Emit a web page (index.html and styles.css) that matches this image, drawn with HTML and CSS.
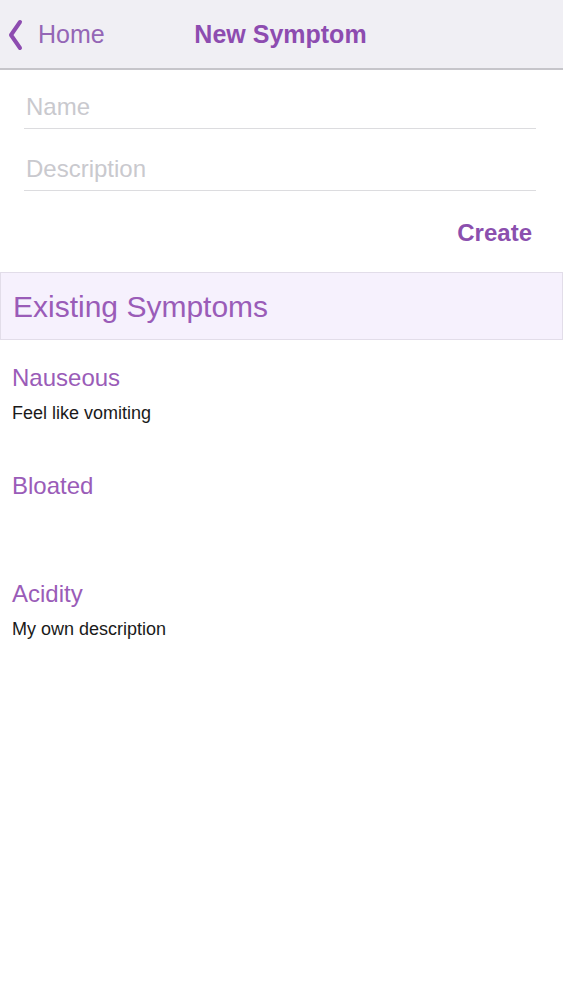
FILE: index.html
```html
<!DOCTYPE html>
<html>
<head>
<meta charset="utf-8">
<link rel="stylesheet" href="styles.css">
</head>
<body>
<div class="nav">
  <div class="back">
    <svg class="chev" width="16" height="32" viewBox="0 0 16 32"><path d="M13 3 L4 16 L13 29" fill="none" stroke="#8d4cb0" stroke-width="4" stroke-linecap="round" stroke-linejoin="round"/></svg>
    <span class="back-label">Home</span>
  </div>
  <div class="title">New Symptom</div>
</div>
<div class="form">
  <div class="field field-first"><span class="placeholder">Name</span></div>
  <div class="field"><span class="placeholder">Description</span></div>
</div>
<div class="actions"><span class="create">Create</span></div>
<div class="section-header">Existing Symptoms</div>
<div class="list">
  <div class="row">
    <div class="row-name">Nauseous</div>
    <div class="row-desc">Feel like vomiting</div>
  </div>
  <div class="row">
    <div class="row-name">Bloated</div>
    <div class="row-desc"></div>
  </div>
  <div class="row">
    <div class="row-name">Acidity</div>
    <div class="row-desc">My own description</div>
  </div>
</div>
</body>
</html>
```
FILE: styles.css
```css
html, body {
  margin: 0;
  padding: 0;
  background: #ffffff;
  font-family: "Liberation Sans", Arial, sans-serif;
}
.nav {
  height: 68px;
  background: #f0eff4;
  border-bottom: 2px solid #c6c5ca;
  display: flex;
  align-items: center;
  justify-content: center;
  position: relative;
}
.back {
  position: absolute;
  left: 7px;
  top: 0;
  height: 68px;
  display: flex;
  align-items: center;
  gap: 15px;
}
.chev {
  display: block;
  margin-top: 2px;
}
.back-label {
  font-size: 25px;
  color: #9466b6;
  line-height: 30px;
}
.title {
  font-size: 25px;
  font-weight: bold;
  color: #8d4cb0;
  line-height: 30px;
  margin-left: -2px;
}
.form {
  padding: 0 27px 0 24px;
}
.field {
  box-sizing: border-box;
  height: 62px;
  border-bottom: 1px solid #dcdcdf;
  display: flex;
  align-items: flex-end;
  padding: 0 0 9px 2px;
}
.field-first {
  height: 59px;
}
.placeholder {
  font-size: 24px;
  line-height: 24px;
  color: #c9c9ce;
}
.actions {
  height: 81px;
  box-sizing: border-box;
  padding: 30px 31px 0 0;
  display: flex;
  justify-content: flex-end;
}
.create {
  font-size: 24px;
  line-height: 24px;
  font-weight: bold;
  color: #8b4fae;
}
.section-header {
  box-sizing: border-box;
  height: 68px;
  background: #f6f1fd;
  border: 1px solid #e2dde9;
  display: flex;
  align-items: center;
  padding-left: 12px;
  padding-top: 2px;
  font-size: 30px;
  line-height: 30px;
  color: #9a5cb8;
}
.list {
  display: flex;
  flex-direction: column;
}
.row {
  box-sizing: border-box;
  height: 108px;
  padding: 24px 12px 0 12px;
  display: flex;
  flex-direction: column;
  gap: 10px;
}
.row-name {
  font-size: 24px;
  line-height: 28px;
  color: #9a5cb8;
}
.row-desc {
  font-size: 18px;
  line-height: 22px;
  min-height: 22px;
  color: #1a1a1a;
}
```
